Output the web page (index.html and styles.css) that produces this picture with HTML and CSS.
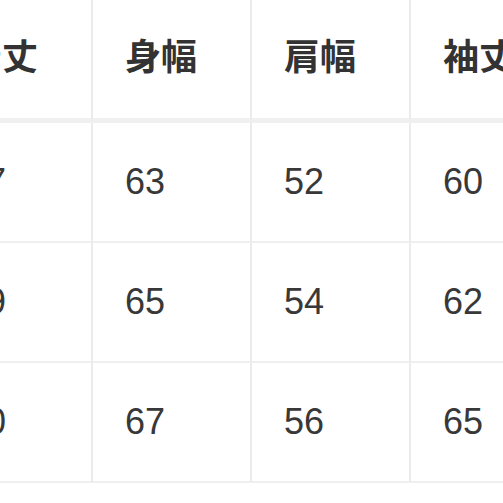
FILE: index.html
```html
<!DOCTYPE html>
<html lang="ja">
<head>
<meta charset="utf-8">
<link rel="stylesheet" href="styles.css">
</head>
<body>
<div class="viewport">
  <div class="table">
    <div class="cell head">着丈</div>
    <div class="cell head">身幅</div>
    <div class="cell head">肩幅</div>
    <div class="cell head">袖丈</div>

    <div class="cell">77</div>
    <div class="cell">63</div>
    <div class="cell">52</div>
    <div class="cell">60</div>

    <div class="cell">79</div>
    <div class="cell">65</div>
    <div class="cell">54</div>
    <div class="cell">62</div>

    <div class="cell">80</div>
    <div class="cell">67</div>
    <div class="cell">56</div>
    <div class="cell">65</div>
  </div>
</div>
</body>
</html>
```

FILE: styles.css
```css
html, body {
  margin: 0;
  padding: 0;
  background: #ffffff;
}
.viewport {
  width: 503px;
  height: 503px;
  overflow: hidden;
}
.table {
  margin-left: -66px;
  display: grid;
  grid-template-columns: repeat(4, 159px);
  width: 636px;
  font-family: "Liberation Sans", "Noto Sans CJK JP", sans-serif;
  color: #383838;
}
.cell {
  box-sizing: border-box;
  height: 120px;
  border-right: 2px solid #ebebeb;
  border-bottom: 2px solid #efefef;
  padding-left: 32px;
  display: flex;
  align-items: center;
  font-size: 36px;
  line-height: 1;
}
.head {
  height: 123px;
  border-bottom: 5px solid #f0f0f0;
  font-family: "Noto Sans CJK JP", sans-serif;
  font-weight: 700;
  color: #333333;
  padding-bottom: 11px;
}
```
